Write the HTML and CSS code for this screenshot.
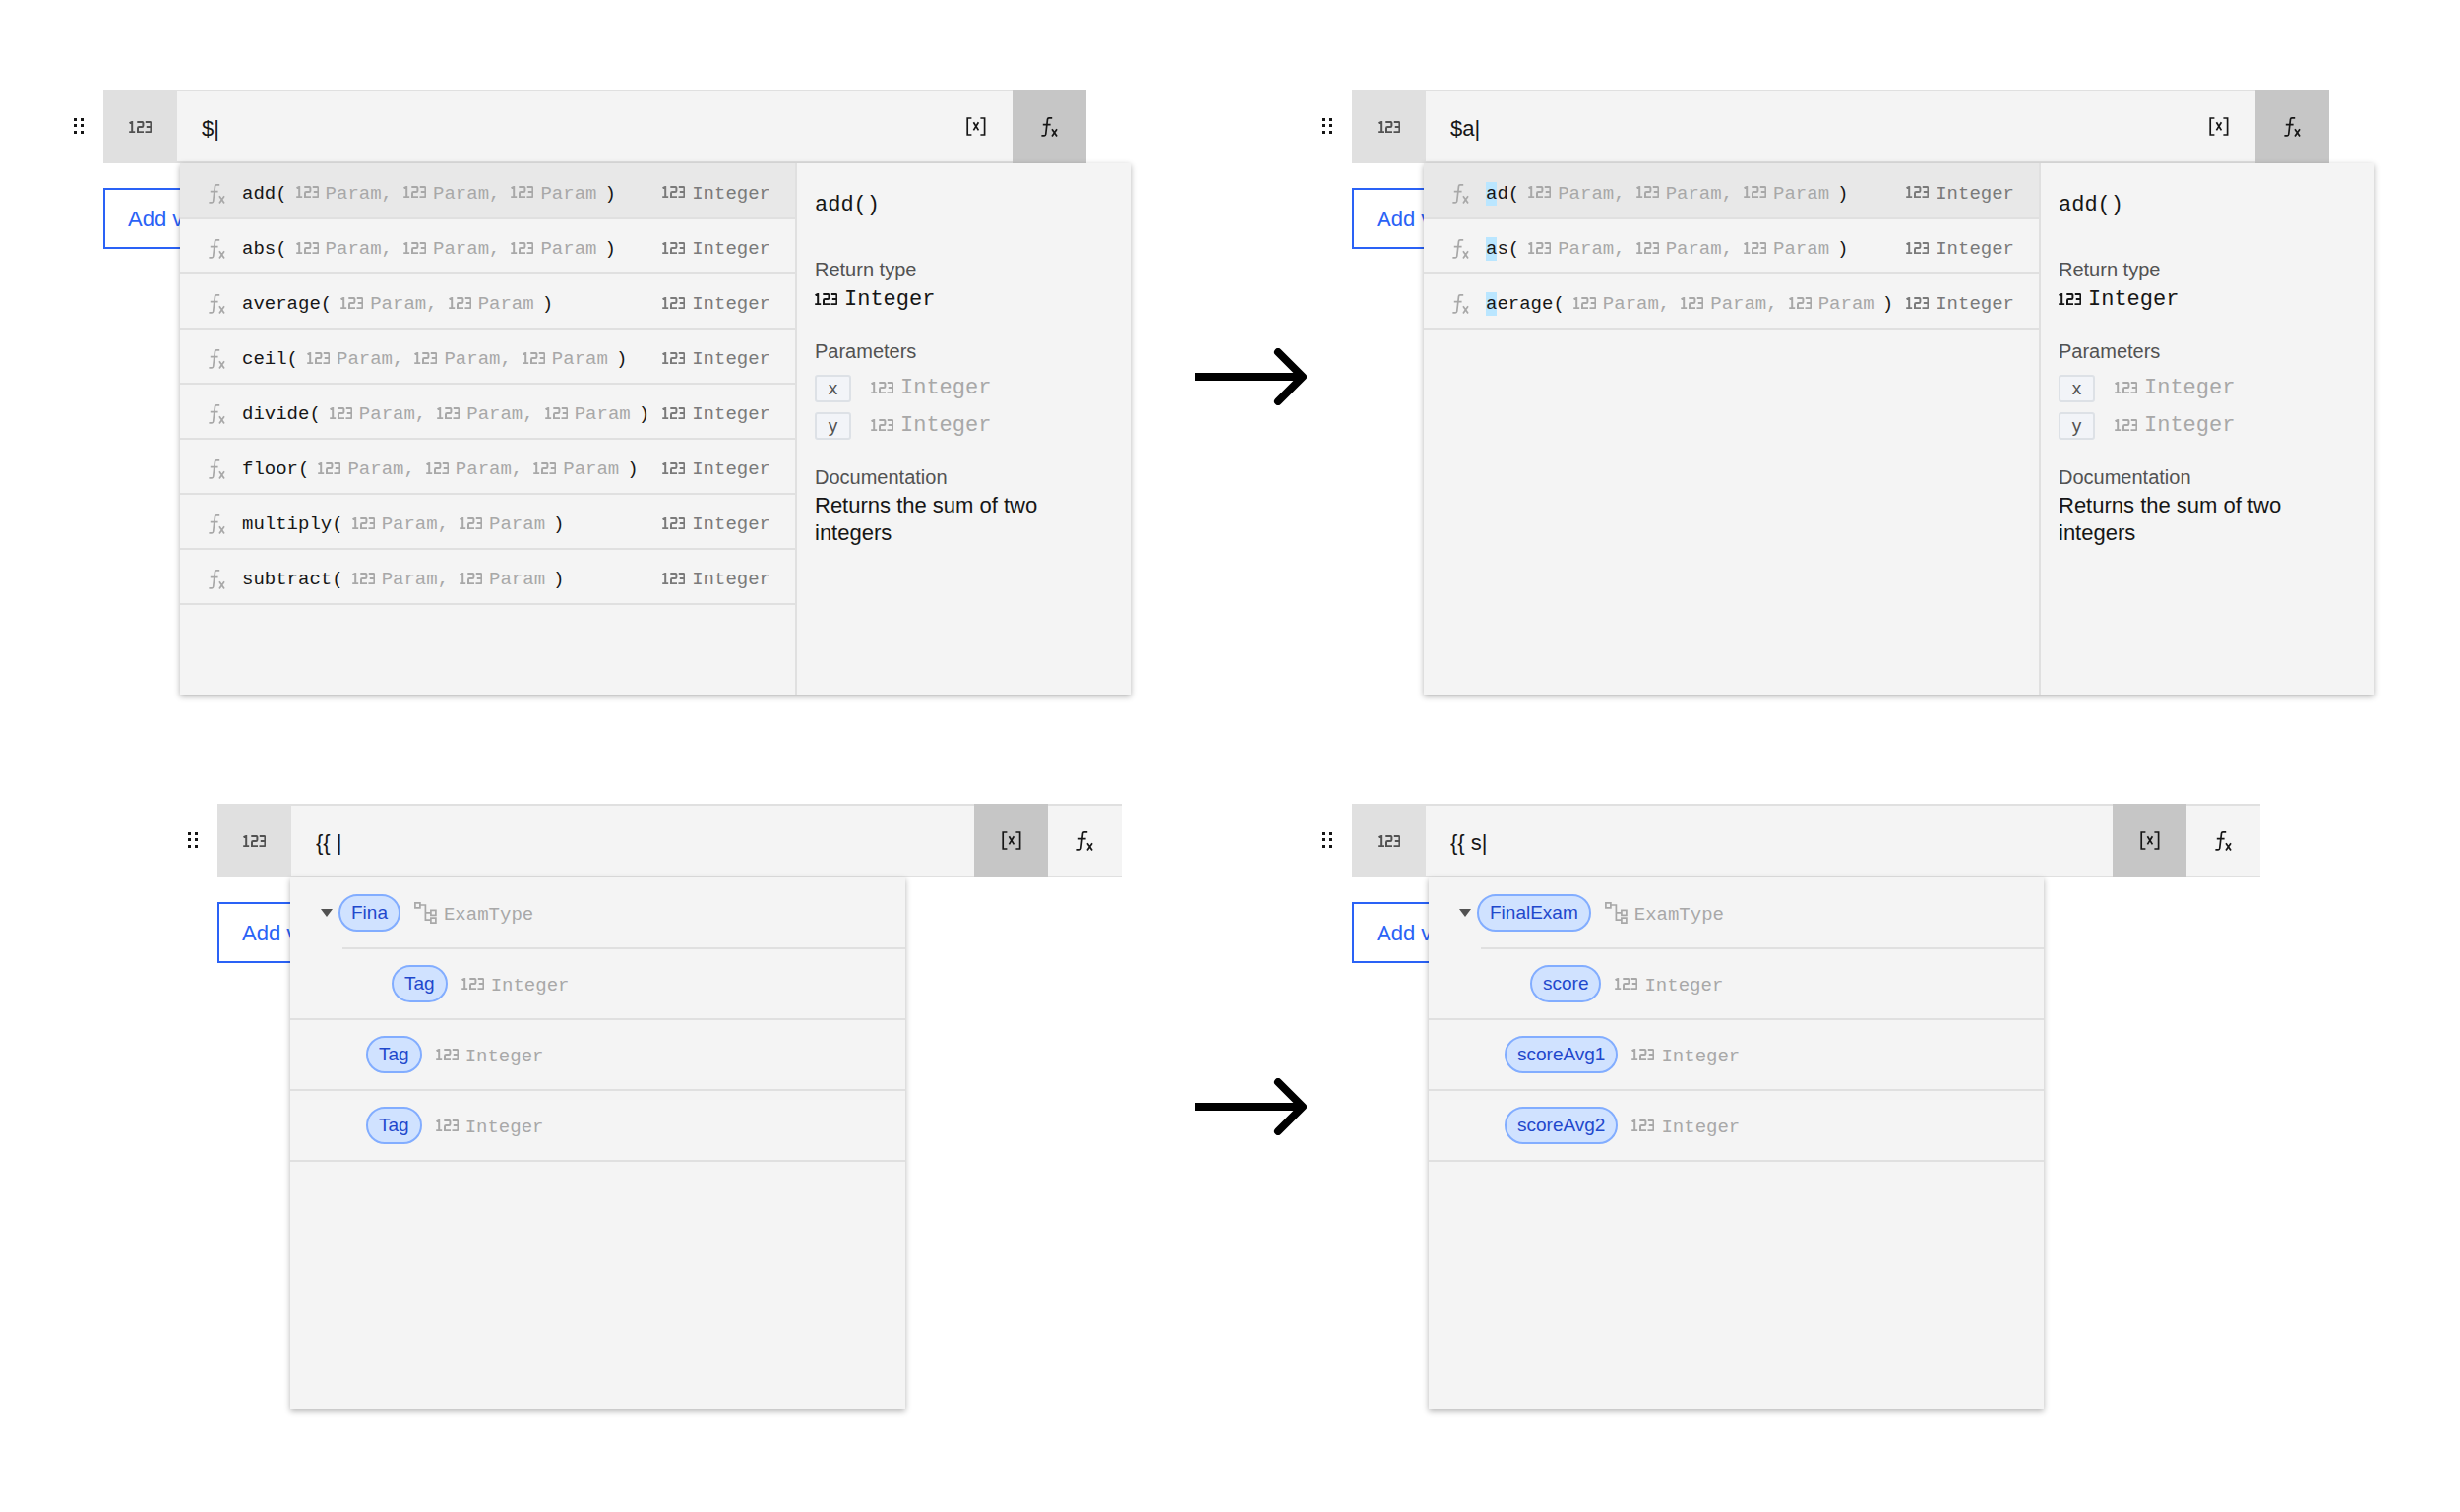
FILE: index.html
```html
<!DOCTYPE html>
<html lang="en">
  <head>
    <meta charset="utf-8">
    <title>Expression autocomplete</title>
    <link rel="stylesheet" href="styles.css">
  </head>

  <body>
    <svg class="sprite" aria-hidden="true">
      <symbol id="drag" viewBox="0 0 10 16">
        <path fill="currentColor" stroke="none" d="M0 0h3v3H0zM7 0h3v3H7zM0 6h3v3H0zM7 6h3v3H7zM0 13h3v3H0zM7 13h3v3H7z"/>
      </symbol>
      <symbol id="int" viewBox="0 0 23 12">
        <path d="M.5 2.2 3.2.9v10.3M.2 11.2h6M8.3.9h4.9a1.2 1.2 0 0 1 1.2 1.2v2.7A1.2 1.2 0 0 1 13.2 6h-3A1.2 1.2 0 0 0 9 7.2v4h6M16.8.9h4.4a1.2 1.2 0 0 1 1.2 1.2V10a1.2 1.2 0 0 1-1.2 1.2h-4.7M17.8 5.9h4.4"/>
      </symbol>
      <symbol id="fx" viewBox="0 0 17 20">
        <path d="M.4 18.8h2.8a1.5 1.5 0 0 0 1.5-1.3L6.5 2.2A1.5 1.5 0 0 1 8 .9h3.2M1.8 7.6h7.8M11 12.3l5 7.2m0-7.2-5 7.2"/>
      </symbol>
      <symbol id="var" viewBox="0 0 20 19">
        <path d="M5.4 1H1.2v17h4.2M14.4 1h4.2v17h-4.2M7.4 5.2l5 8.2m0-8.2-5 8.2"/>
      </symbol>
      <symbol id="tree" viewBox="0 0 23 22">
        <path d="M.9.9h5v5h-5zM16.9 8.4h5v5h-5zM16.9 16.2h5v5h-5zM6 3h5.4v15.2h5.4M11.4 10.9h5.4"/>
      </symbol>
      <symbol id="caret" viewBox="0 0 12 8">
        <path fill="currentColor" stroke="none" d="M0 0h12L6 8z"/>
      </symbol>
      <symbol id="arrow" viewBox="0 0 114 58">
        <path class="arrow-line" d="M0 29h109"/>
        <path class="arrow-line" stroke-linecap="round" stroke-linejoin="round" d="M85 4l25 25-25 25"/>
      </symbol>
    </svg>

    <main>
      <section class="flow flow-functions">
        <div class="editor editor-fn-all">
          <svg class="drag"><use href="#drag"/></svg>
          <div class="body">
            <div class="field">
              <span class="type"><svg class="int"><use href="#int"/></svg></span>
              <input type="text" value="$|" aria-label="Expression">
              <button aria-label="Variables"><svg class="var"><use href="#var"/></svg></button>
              <button class="on" aria-label="Functions"><svg class="fx"><use href="#fx"/></svg></button>
            </div>
            <div class="below">
              <button class="add">Add value</button>
              <div class="menu menu-fn">
                <ul class="functions">
                  <li class="active">
                    <svg class="fx"><use href="#fx"/></svg>
                    <span class="name">add(</span>
                    <span class="param"><svg class="int"><use href="#int"/></svg>Param,</span>
                    <span class="param"><svg class="int"><use href="#int"/></svg>Param,</span>
                    <span class="param"><svg class="int"><use href="#int"/></svg>Param</span>
                    <span class="close">)</span>
                    <span class="return"><svg class="int"><use href="#int"/></svg>Integer</span>
                  </li>
                  <li>
                    <svg class="fx"><use href="#fx"/></svg>
                    <span class="name">abs(</span>
                    <span class="param"><svg class="int"><use href="#int"/></svg>Param,</span>
                    <span class="param"><svg class="int"><use href="#int"/></svg>Param,</span>
                    <span class="param"><svg class="int"><use href="#int"/></svg>Param</span>
                    <span class="close">)</span>
                    <span class="return"><svg class="int"><use href="#int"/></svg>Integer</span>
                  </li>
                  <li>
                    <svg class="fx"><use href="#fx"/></svg>
                    <span class="name">average(</span>
                    <span class="param"><svg class="int"><use href="#int"/></svg>Param,</span>
                    <span class="param"><svg class="int"><use href="#int"/></svg>Param</span>
                    <span class="close">)</span>
                    <span class="return"><svg class="int"><use href="#int"/></svg>Integer</span>
                  </li>
                  <li>
                    <svg class="fx"><use href="#fx"/></svg>
                    <span class="name">ceil(</span>
                    <span class="param"><svg class="int"><use href="#int"/></svg>Param,</span>
                    <span class="param"><svg class="int"><use href="#int"/></svg>Param,</span>
                    <span class="param"><svg class="int"><use href="#int"/></svg>Param</span>
                    <span class="close">)</span>
                    <span class="return"><svg class="int"><use href="#int"/></svg>Integer</span>
                  </li>
                  <li>
                    <svg class="fx"><use href="#fx"/></svg>
                    <span class="name">divide(</span>
                    <span class="param"><svg class="int"><use href="#int"/></svg>Param,</span>
                    <span class="param"><svg class="int"><use href="#int"/></svg>Param,</span>
                    <span class="param"><svg class="int"><use href="#int"/></svg>Param</span>
                    <span class="close">)</span>
                    <span class="return"><svg class="int"><use href="#int"/></svg>Integer</span>
                  </li>
                  <li>
                    <svg class="fx"><use href="#fx"/></svg>
                    <span class="name">floor(</span>
                    <span class="param"><svg class="int"><use href="#int"/></svg>Param,</span>
                    <span class="param"><svg class="int"><use href="#int"/></svg>Param,</span>
                    <span class="param"><svg class="int"><use href="#int"/></svg>Param</span>
                    <span class="close">)</span>
                    <span class="return"><svg class="int"><use href="#int"/></svg>Integer</span>
                  </li>
                  <li>
                    <svg class="fx"><use href="#fx"/></svg>
                    <span class="name">multiply(</span>
                    <span class="param"><svg class="int"><use href="#int"/></svg>Param,</span>
                    <span class="param"><svg class="int"><use href="#int"/></svg>Param</span>
                    <span class="close">)</span>
                    <span class="return"><svg class="int"><use href="#int"/></svg>Integer</span>
                  </li>
                  <li>
                    <svg class="fx"><use href="#fx"/></svg>
                    <span class="name">subtract(</span>
                    <span class="param"><svg class="int"><use href="#int"/></svg>Param,</span>
                    <span class="param"><svg class="int"><use href="#int"/></svg>Param</span>
                    <span class="close">)</span>
                    <span class="return"><svg class="int"><use href="#int"/></svg>Integer</span>
                  </li>
                </ul>
                <div class="details">
                  <h2>add()</h2>
                  <h3>Return type</h3>
                  <p class="kind"><svg class="int"><use href="#int"/></svg>Integer</p>
                  <h3>Parameters</h3>
                  <p class="arg"><code>x</code><svg class="int"><use href="#int"/></svg>Integer</p>
                  <p class="arg"><code>y</code><svg class="int"><use href="#int"/></svg>Integer</p>
                  <h3>Documentation</h3>
                  <p class="doc">Returns the sum of two integers</p>
                </div>
              </div>
            </div>
          </div>
        </div>

        <svg class="arrow"><use href="#arrow"/></svg>

        <div class="editor editor-fn-match">
          <svg class="drag"><use href="#drag"/></svg>
          <div class="body">
            <div class="field">
              <span class="type"><svg class="int"><use href="#int"/></svg></span>
              <input type="text" value="$a|" aria-label="Expression">
              <button aria-label="Variables"><svg class="var"><use href="#var"/></svg></button>
              <button class="on" aria-label="Functions"><svg class="fx"><use href="#fx"/></svg></button>
            </div>
            <div class="below">
              <button class="add">Add value</button>
              <div class="menu menu-fn">
                <ul class="functions">
                  <li class="active">
                    <svg class="fx"><use href="#fx"/></svg>
                    <span class="name"><mark>a</mark>d(</span>
                    <span class="param"><svg class="int"><use href="#int"/></svg>Param,</span>
                    <span class="param"><svg class="int"><use href="#int"/></svg>Param,</span>
                    <span class="param"><svg class="int"><use href="#int"/></svg>Param</span>
                    <span class="close">)</span>
                    <span class="return"><svg class="int"><use href="#int"/></svg>Integer</span>
                  </li>
                  <li>
                    <svg class="fx"><use href="#fx"/></svg>
                    <span class="name"><mark>a</mark>s(</span>
                    <span class="param"><svg class="int"><use href="#int"/></svg>Param,</span>
                    <span class="param"><svg class="int"><use href="#int"/></svg>Param,</span>
                    <span class="param"><svg class="int"><use href="#int"/></svg>Param</span>
                    <span class="close">)</span>
                    <span class="return"><svg class="int"><use href="#int"/></svg>Integer</span>
                  </li>
                  <li>
                    <svg class="fx"><use href="#fx"/></svg>
                    <span class="name"><mark>a</mark>erage(</span>
                    <span class="param"><svg class="int"><use href="#int"/></svg>Param,</span>
                    <span class="param"><svg class="int"><use href="#int"/></svg>Param,</span>
                    <span class="param"><svg class="int"><use href="#int"/></svg>Param</span>
                    <span class="close">)</span>
                    <span class="return"><svg class="int"><use href="#int"/></svg>Integer</span>
                  </li>
                </ul>
                <div class="details">
                  <h2>add()</h2>
                  <h3>Return type</h3>
                  <p class="kind"><svg class="int"><use href="#int"/></svg>Integer</p>
                  <h3>Parameters</h3>
                  <p class="arg"><code>x</code><svg class="int"><use href="#int"/></svg>Integer</p>
                  <p class="arg"><code>y</code><svg class="int"><use href="#int"/></svg>Integer</p>
                  <h3>Documentation</h3>
                  <p class="doc">Returns the sum of two integers</p>
                </div>
              </div>
            </div>
          </div>
        </div>
      </section>

      <section class="flow">
        <div class="editor editor-var-all">
          <svg class="drag"><use href="#drag"/></svg>
          <div class="body">
            <div class="field">
              <span class="type"><svg class="int"><use href="#int"/></svg></span>
              <input type="text" value="{{ |" aria-label="Expression">
              <button class="on" aria-label="Variables"><svg class="var"><use href="#var"/></svg></button>
              <button aria-label="Functions"><svg class="fx"><use href="#fx"/></svg></button>
            </div>
            <div class="below">
              <button class="add">Add value</button>
              <ul class="menu variables">
                <li class="parent">
                  <button class="toggle" aria-label="Collapse"><svg class="caret"><use href="#caret"/></svg></button>
                  <span class="tag">Fina</span>
                  <svg class="tree"><use href="#tree"/></svg>ExamType
                </li>
                <li class="child">
                  <span class="tag">Tag</span>
                  <svg class="int"><use href="#int"/></svg>Integer
                </li>
                <li>
                  <span class="tag">Tag</span>
                  <svg class="int"><use href="#int"/></svg>Integer
                </li>
                <li>
                  <span class="tag">Tag</span>
                  <svg class="int"><use href="#int"/></svg>Integer
                </li>
              </ul>
            </div>
          </div>
        </div>

        <svg class="arrow"><use href="#arrow"/></svg>

        <div class="editor editor-var-match">
          <svg class="drag"><use href="#drag"/></svg>
          <div class="body">
            <div class="field">
              <span class="type"><svg class="int"><use href="#int"/></svg></span>
              <input type="text" value="{{ s|" aria-label="Expression">
              <button class="on" aria-label="Variables"><svg class="var"><use href="#var"/></svg></button>
              <button aria-label="Functions"><svg class="fx"><use href="#fx"/></svg></button>
            </div>
            <div class="below">
              <button class="add">Add value</button>
              <ul class="menu variables">
                <li class="parent">
                  <button class="toggle" aria-label="Collapse"><svg class="caret"><use href="#caret"/></svg></button>
                  <span class="tag">FinalExam</span>
                  <svg class="tree"><use href="#tree"/></svg>ExamType
                </li>
                <li class="child">
                  <span class="tag">score</span>
                  <svg class="int"><use href="#int"/></svg>Integer
                </li>
                <li>
                  <span class="tag">scoreAvg1</span>
                  <svg class="int"><use href="#int"/></svg>Integer
                </li>
                <li>
                  <span class="tag">scoreAvg2</span>
                  <svg class="int"><use href="#int"/></svg>Integer
                </li>
              </ul>
            </div>
          </div>
        </div>
      </section>
    </main>
  </body>
</html>
```
FILE: styles.css
```css
* {
  box-sizing: border-box;
}

body {
  margin: 0;
  background: #fff;
  color: #161616;
  font: 22px/28px "Liberation Sans", Arial, sans-serif;
}

h2, h3, p, ul {
  margin: 0;
  padding: 0;
  font-weight: normal;
}

ul {
  list-style: none;
}

button, input {
  margin: 0;
  border: 0;
  padding: 0;
  background: none;
  color: inherit;
  font: inherit;
}

svg {
  flex: none;
  fill: none;
  stroke: currentColor;
  stroke-width: 1.7;
}

.sprite {
  display: none;
}

.drag { width: 10px; height: 16px; }
.int { width: 23px; height: 12px; stroke-width: 2; }
.fx { width: 17px; height: 20px; }
.var { width: 20px; height: 19px; }
.tree { width: 23px; height: 22px; }
.caret { width: 12px; height: 8px; }
.arrow { width: 114px; height: 58px; color: #000; }
.arrow-line { stroke-width: 8; }

main {
  display: flex;
  flex-direction: column;
  gap: 111px;
  padding: 91px 33px 91px 75px;
}

.flow {
  display: grid;
  grid-template-columns: minmax(0, 1fr) 114px minmax(0, 1fr);
  align-items: center;
  gap: 16px;
}

.flow-functions .arrow {
  margin-bottom: 32px;
}

/* editor row */

.editor {
  display: flex;
  gap: 20px;
}

.editor-fn-all { padding-right: 94px; --menu-indent: 78px; }
.editor-fn-match { padding-right: 100px; --menu-indent: 73px; }
.editor-var-all { padding: 0 58px 0 116px; --menu-indent: 74px; }
.editor-var-match { padding-right: 170px; --menu-indent: 78px; }

.drag {
  margin-top: 29px;
}

.body {
  flex: 1;
  min-width: 0;
}

.field {
  display: flex;
  height: 75px;
  background: #f4f4f4;
  border-top: 2px solid #e0e0e0;
  border-bottom: 2px solid #e0e0e0;
}

.field .type,
.field button {
  display: flex;
  align-items: center;
  justify-content: center;
  width: 75px;
  flex: none;
  margin: -2px 0;
}

.field .type {
  background: #e0e0e0;
  color: #525252;
}

.field button.on {
  background: #c6c6c6;
}

.field input {
  flex: 1;
  min-width: 0;
  padding: 4px 25px 0;
  outline: 0;
}

/* the button and the open menu share one cell, the menu lies on top */

.below {
  display: grid;
  grid-template-columns: minmax(0, 1fr);
  align-items: start;
}

.add,
.menu {
  grid-area: 1 / 1;
}

.add {
  justify-self: start;
  margin-top: 25px;
  height: 62px;
  padding: 2px 23px 0;
  border: 2px solid #2a62f6;
  color: #2a62f6;
}

.menu {
  z-index: 1;
  min-height: 540px;
  margin-left: var(--menu-indent);
  background: #f4f4f4;
  box-shadow: 0 2px 6px rgba(0, 0, 0, .3);
}

/* functions */

.menu-fn {
  display: flex;
  width: 966px;
}

.functions {
  width: 627px;
  border-right: 2px solid #e0e0e0;
  font: 19px/24px "Liberation Mono", monospace;
}

.functions li {
  display: flex;
  align-items: center;
  height: 56px;
  padding: 6px 25px 0 29px;
  border-bottom: 2px solid #e0e0e0;
}

.functions li.active {
  height: 57px;
  background: #e8e8e8;
}

.functions .fx {
  color: #a8a8a8;
}

.functions .int {
  margin-bottom: 3px;
}

.name {
  margin: 0 9px 0 17px;
}

mark {
  display: inline-block;
  background: #bae6ff;
  color: inherit;
}

.param,
.return {
  display: flex;
  align-items: center;
  gap: 7px;
}

.param {
  color: #a8a8a8;
}

.param + .param {
  margin-left: 11px;
}

.close {
  margin-left: 8px;
}

.return {
  margin-left: auto;
  color: #7a7a7a;
}

.details {
  flex: 1;
  padding: 29px 18px;
}

h2, .kind, .arg {
  font: 22px/28px "Liberation Mono", monospace;
}

h3 {
  margin-top: 24px;
  color: #525252;
  font-size: 20px;
  line-height: 28px;
}

h2 + h3 {
  margin-top: 37px;
}

.kind,
.arg {
  display: flex;
  align-items: center;
  gap: 7px;
}

.kind {
  margin-top: 3px;
}

.kind .int,
.arg .int {
  margin-bottom: 2px;
}

.arg {
  margin: 10px 0;
  color: #a8a8a8;
}

.arg code {
  width: 37px;
  height: 28px;
  margin-right: 13px;
  border: 2px solid #dde1e6;
  border-radius: 3px;
  background: #f2f4f8;
  color: #525252;
  font: 19px/24px "Liberation Sans", Arial, sans-serif;
  text-align: center;
}

.doc {
  margin-top: 1px;
}

/* variables */

.variables {
  width: 625px;
  padding-top: 1px;
  color: #a8a8a8;
  font: 19px/24px "Liberation Mono", monospace;
}

.variables li {
  display: flex;
  align-items: center;
  height: 72px;
  padding: 3px 0 0 77px;
  border-bottom: 2px solid #e0e0e0;
}

.variables .parent {
  margin-left: 53px;
  padding-left: 0;
}

.variables .child {
  padding-left: 103px;
}

/* pulls the caret out past the start of the row's rule */
.toggle {
  display: flex;
  margin: 0 6px 3px -22px;
  color: #525252;
}

.tag {
  height: 38px;
  margin: 0 14px 3px 0;
  padding: 0 11px;
  border: 2px solid #82adff;
  border-radius: 19px;
  background: #d0e2ff;
  color: #1f48cc;
  font: 19px/34px "Liberation Sans", Arial, sans-serif;
}

.variables .int,
.variables .tree {
  margin: 0 7px 3px 0;
}
```
